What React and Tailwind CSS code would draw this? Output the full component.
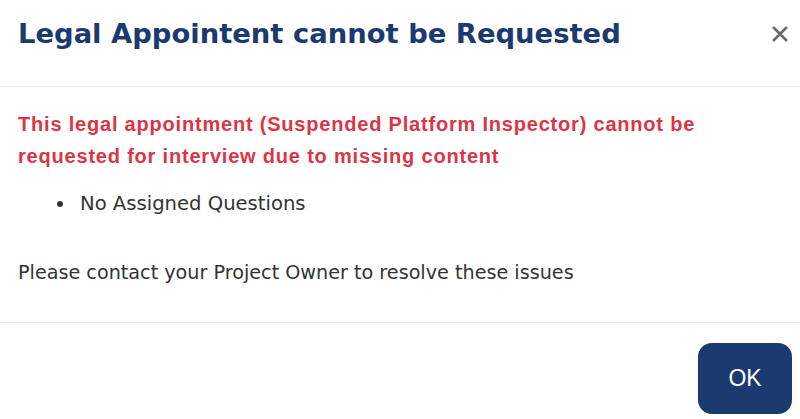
export default function App() {
  return (
    <div className="w-[800px] h-[419px] bg-white overflow-hidden" style={{ fontFamily: '"DejaVu Sans", sans-serif' }}>
      <div className="h-[87px] flex items-start justify-between pl-[18px] pr-[8px] pt-[20px] border-b border-[#ececec]">
        <h1 className="text-[27.4px] font-bold text-[#1b3a6f] leading-none">Legal Appointent cannot be Requested</h1>
        <button className="w-[24px] h-[24px] flex items-center justify-center mt-[2px]">
          <svg width="18" height="18" viewBox="0 0 18 18">
            <path d="M2 2 L16 16 M16 2 L2 16" stroke="#6b6b6b" strokeWidth="2.6" strokeLinecap="butt" />
          </svg>
        </button>
      </div>
      <div className="px-[18px] pt-[21px] pb-[33px] border-b border-[#ececec]">
        <p className="text-[20px] font-bold text-[#dc3545] leading-[32px] tracking-[0.8px]" style={{ fontFamily: '"Liberation Sans", Arial, sans-serif' }}>
          This legal appointment (Suspended Platform Inspector) cannot be
          <br />
          requested for interview due to missing content
        </p>
        <ul className="mt-[16px] pl-[58px] list-disc text-[19.6px] text-[#333] leading-[32px]">
          <li className="pl-[4px]">No Assigned Questions</li>
        </ul>
        <p className="mt-[37px] text-[19.2px] text-[#333] leading-[32px]">Please contact your Project Owner to resolve these issues</p>
      </div>
      <div className="flex justify-end pr-[8px] pt-[20px]">
        <button className="w-[94px] h-[71px] rounded-[14px] bg-[#1b3a6f] text-white text-[23px] flex items-center justify-center" style={{ fontFamily: '"Liberation Sans", Arial, sans-serif' }}>OK</button>
      </div>
    </div>
  );
}
